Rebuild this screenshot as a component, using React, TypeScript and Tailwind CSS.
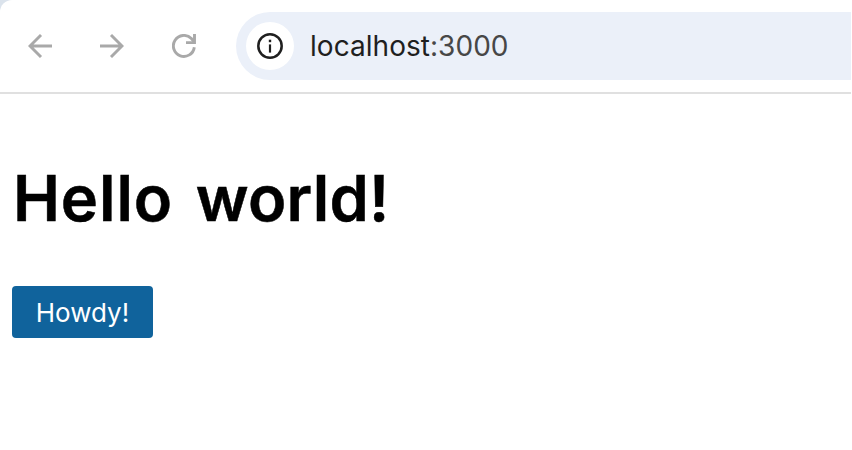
function BackIcon() {
  return (
    <svg width="24" height="24" viewBox="0 0 24 24" fill="none" stroke="#a9a9a9" strokeWidth="2.9" className="shrink-0">
      <path d="M24 12H2M13 1L2 12l11 11" />
    </svg>
  );
}

function ForwardIcon() {
  return (
    <svg width="24" height="24" viewBox="0 0 24 24" fill="none" stroke="#a9a9a9" strokeWidth="2.9" className="shrink-0">
      <path d="M0 12h22M11 1l11 11-11 11" />
    </svg>
  );
}

function ReloadIcon() {
  return (
    <svg width="24" height="24" viewBox="0 0 24 24" fill="none" stroke="#a9a9a9" strokeWidth="2.9" className="shrink-0">
      <path d="M22.3 13.2A10.5 10.5 0 1 1 19.4 4.6L22.3 8" />
      <path d="M22.5 0v8.6H14" />
    </svg>
  );
}

function InfoIcon() {
  return (
    <svg width="26" height="26" viewBox="0 0 26 26" fill="none" stroke="#1f1f1f" className="shrink-0">
      <circle cx="13" cy="13" r="11.7" strokeWidth="2.5" />
      <path d="M13 11.4v8.2" strokeWidth="2.2" />
      <path d="M13 6.7v2.5" strokeWidth="2.4" />
    </svg>
  );
}

export default function App() {
  return (
    <div className="h-[450px] w-[852px] overflow-hidden bg-white pr-px font-['Inter',sans-serif]">
      <div className="bg-[#dbe3ec]">
        <header className="flex h-[94px] items-center rounded-tl-[12px] border-b-2 border-[#e0e0e0] bg-white pl-7">
          <nav className="flex gap-12">
            <BackIcon />
            <ForwardIcon />
            <ReloadIcon />
          </nav>
          <div className="ml-10 flex h-[68px] grow items-center rounded-l-full bg-[#ebf0f9] pl-2.5">
            <div className="flex size-12 items-center justify-center rounded-full bg-white">
              <InfoIcon />
            </div>
            <span className="ml-4 text-[28px] leading-8 tracking-[0.04px] text-[#1f1f1f]">
              localhost<span className="text-[#474747]">:3000</span>
            </span>
          </div>
        </header>
      </div>
      <main className="px-3 pt-[66px]">
        <h1 className="pl-px text-[63px] leading-[76px] font-semibold tracking-[0.9px] whitespace-nowrap text-black [-webkit-text-stroke:0.5px_black] [word-spacing:6px]">
          Hello <span className="tracking-[0.2px]">world!</span>
        </h1>
        <button className="mt-[50px] flex h-[52px] w-[141px] items-center justify-center rounded-[4px] bg-[#10639c] text-[26px] text-white">
          Howdy!
        </button>
      </main>
    </div>
  );
}
